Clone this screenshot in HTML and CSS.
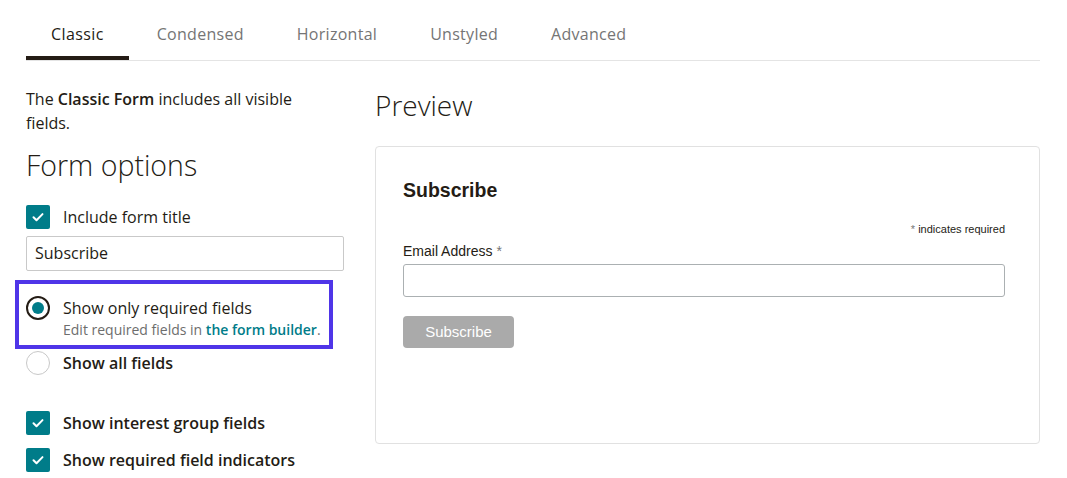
FILE: index.html
```html
<!DOCTYPE html>
<html lang="en">
<head>
<meta charset="utf-8">
<title>Form options</title>
<link rel="stylesheet" href="styles.css">
</head>
<body>
<div class="page">
  <nav class="tabs">
    <a class="tab active">Classic</a>
    <a class="tab">Condensed</a>
    <a class="tab">Horizontal</a>
    <a class="tab">Unstyled</a>
    <a class="tab">Advanced</a>
  </nav>
  <div class="main">
    <section class="options">
      <p class="intro">The <strong>Classic Form</strong> includes all visible fields.</p>
      <h2 class="options-title">Form options</h2>
      <label class="row row-first">
        <span class="check"><svg viewBox="0 0 24 24" width="24" height="24"><path d="M7.5 12.3l3 3 6-6.2" fill="none" stroke="#fff" stroke-width="2" stroke-linecap="round" stroke-linejoin="round"/></svg></span>
        <span class="label">Include form title</span>
      </label>
      <div class="text-input">Subscribe</div>
      <div class="highlight">
        <label class="row">
          <span class="radio checked"><span class="dot"></span></span>
          <span class="label">Show only required fields</span>
        </label>
        <div class="hint">Edit required fields in <a class="link">the form builder</a>.</div>
      </div>
      <label class="row row-radio2">
        <span class="radio"></span>
        <span class="label strong">Show all fields</span>
      </label>
      <label class="row row-check3">
        <span class="check"><svg viewBox="0 0 24 24" width="24" height="24"><path d="M7.5 12.3l3 3 6-6.2" fill="none" stroke="#fff" stroke-width="2" stroke-linecap="round" stroke-linejoin="round"/></svg></span>
        <span class="label strong">Show interest group fields</span>
      </label>
      <label class="row row-check4">
        <span class="check"><svg viewBox="0 0 24 24" width="24" height="24"><path d="M7.5 12.3l3 3 6-6.2" fill="none" stroke="#fff" stroke-width="2" stroke-linecap="round" stroke-linejoin="round"/></svg></span>
        <span class="label strong">Show required field indicators</span>
      </label>
    </section>
    <section class="preview">
      <h2 class="preview-title">Preview</h2>
      <div class="card">
        <h3 class="card-title">Subscribe</h3>
        <div class="required-note"><span class="asterisk">*</span> indicates required</div>
        <div class="field-label">Email Address <span class="asterisk">*</span></div>
        <div class="email-input"></div>
        <div class="btn">Subscribe</div>
      </div>
    </section>
  </div>
</div>
</body>
</html>
```
FILE: styles.css
```css
* { box-sizing: border-box; }
html, body { margin: 0; padding: 0; background: #fff; }
body {
  font-family: "Open Sans", "Liberation Sans", sans-serif;
  color: #241c15;
  font-size: 16px;
}
.page {
  width: 1040px;
  padding-left: 26px;
}
.tabs {
  display: flex;
  gap: 3px;
  border-bottom: 1px solid #e4e4e4;
  height: 61px;
}
.tab {
  display: block;
  padding: 22px 25px 10px;
  line-height: 24px;
  font-size: 16px;
  letter-spacing: 0.28px;
  color: #757575;
  border-bottom: 4px solid transparent;
  height: 60px;
}
.tab.active {
  color: #241c15;
  border-bottom-color: #241c15;
  font-weight: 500;
  letter-spacing: 0.4px;
}
.main {
  display: flex;
  gap: 31px;
  padding-top: 26px;
}
.options {
  width: 318px;
  flex: none;
}
.intro {
  margin: 0;
  width: 300px;
  font-size: 16px;
  line-height: 24px;
}
.intro strong { font-weight: 600; }
.options-title {
  margin: 12px 0 0;
  font-size: 28.5px;
  font-weight: 300;
  line-height: 36px;
}
.row {
  display: flex;
  align-items: center;
  gap: 13px;
  height: 24px;
  font-size: 16px;
}
.row-first { margin-top: 22px; }
.label { line-height: 24px; }
.label.strong { font-weight: 600; }
.check {
  width: 24px;
  height: 24px;
  border-radius: 2px;
  background: #007c89;
  flex: none;
  display: block;
}
.check svg { display: block; }
.text-input {
  margin-top: 7px;
  height: 35px;
  border: 1px solid #c9c9c9;
  border-radius: 2px;
  padding: 0 8px;
  line-height: 33px;
  font-size: 16px;
}
.highlight {
  margin: 9px 0 0 -11px;
  width: 318px;
  border: 4px solid #4f35e8;
  padding: 12px 0 5px 7px;
}
.radio {
  width: 24px;
  height: 24px;
  border-radius: 50%;
  border: 1px solid #c8c8c8;
  flex: none;
  display: flex;
  align-items: center;
  justify-content: center;
}
.radio.checked { border: 2px solid #241c15; }
.dot {
  width: 12px;
  height: 12px;
  border-radius: 50%;
  background: #007c89;
}
.hint {
  padding-left: 37px;
  font-size: 14px;
  line-height: 20px;
  color: #6d6d6d;
  font-weight: 500;
}
.link { color: #007c89; font-weight: 600; }
.row-radio2 { margin-top: 2px; }
.row-check3 { margin-top: 36px; }
.row-check4 { margin-top: 13px; }
.preview {
  width: 665px;
  flex: none;
}
.preview-title {
  margin: 2px 0 0;
  font-size: 28px;
  font-weight: 300;
  line-height: 32px;
}
.card {
  margin-top: 25px;
  height: 298px;
  border: 1px solid #e1e1e1;
  border-radius: 4px;
  padding: 31px 34px 0 27px;
  font-family: "Liberation Sans", Arial, sans-serif;
}
.card-title {
  margin: 0;
  font-size: 19.5px;
  line-height: 24px;
  font-weight: 700;
}
.required-note {
  margin-top: 20px;
  text-align: right;
  font-size: 11px;
  line-height: 14px;
}
.asterisk { color: #777; }
.field-label {
  margin-top: 6px;
  font-size: 14px;
  line-height: 18px;
}
.email-input {
  margin-top: 4px;
  height: 33px;
  border: 1px solid #abb0b2;
  border-radius: 3px;
}
.btn {
  margin-top: 19px;
  width: 111px;
  height: 32px;
  background: #aaa;
  border-radius: 4px;
  color: #fff;
  font-size: 15px;
  line-height: 32px;
  text-align: center;
}
```
